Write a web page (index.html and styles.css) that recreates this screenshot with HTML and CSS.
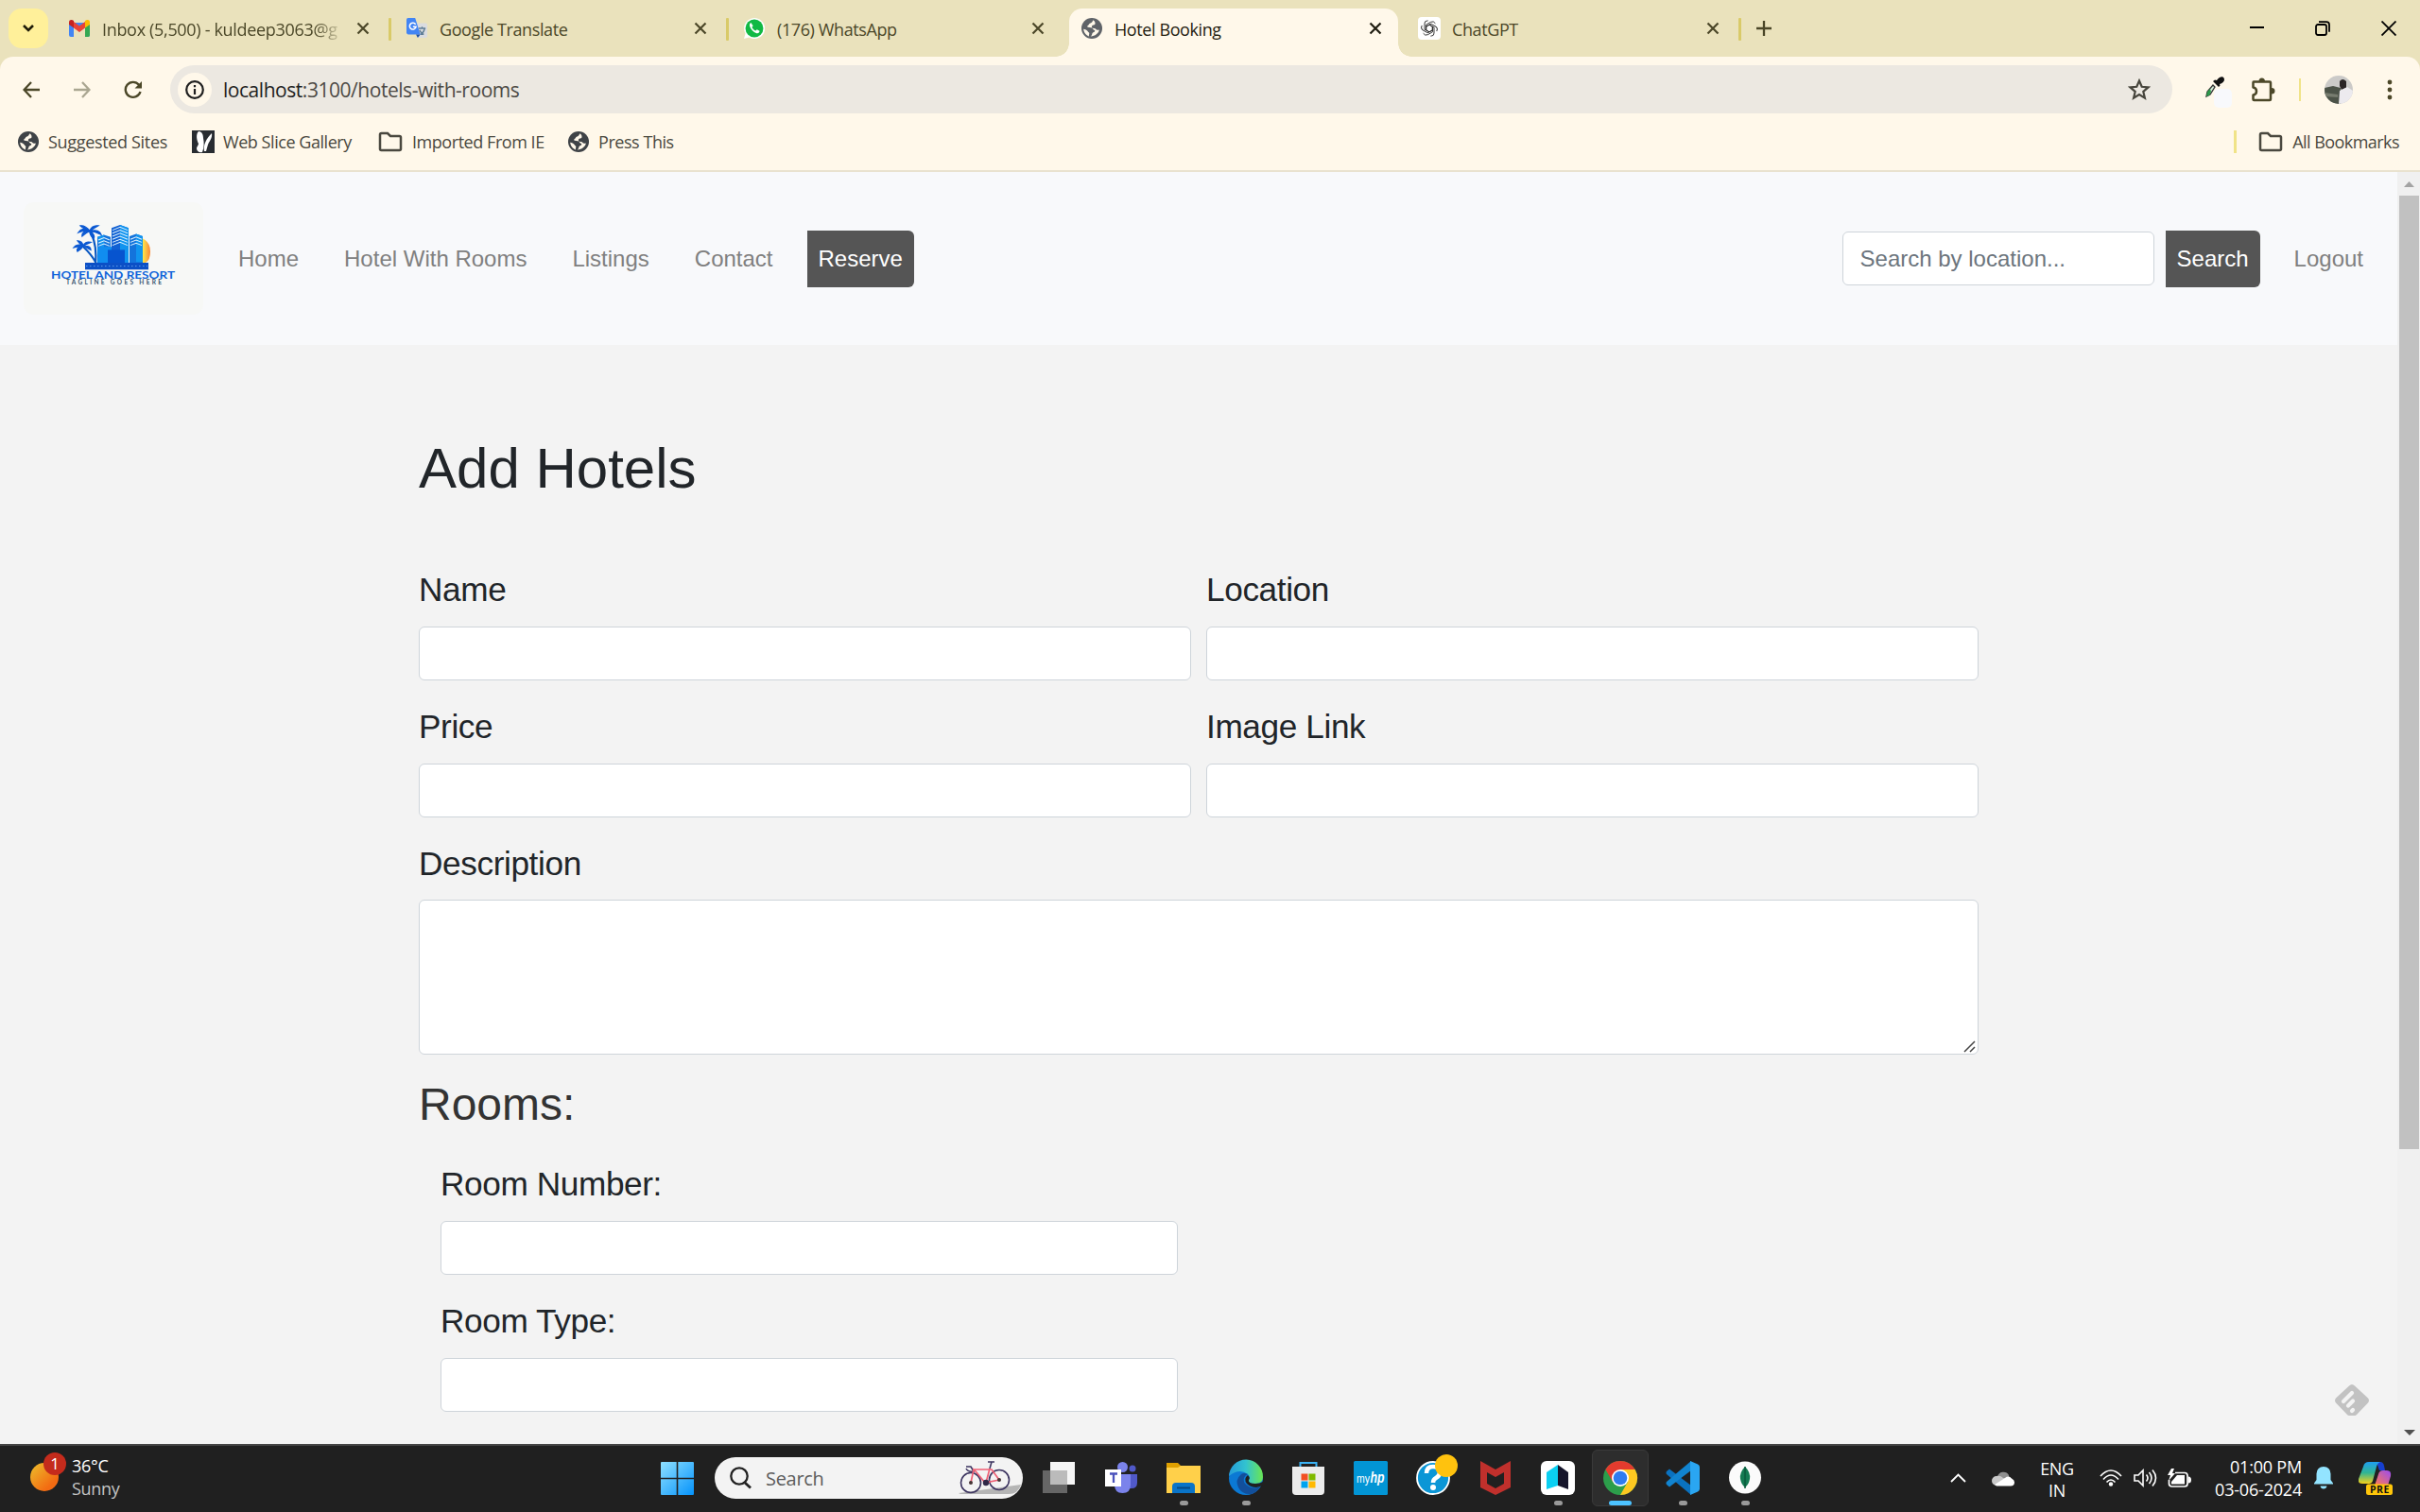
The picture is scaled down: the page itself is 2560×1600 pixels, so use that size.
FILE: index.html
```html
<!DOCTYPE html>
<html lang="en">
<head>
<meta charset="utf-8">
<title>Hotel Booking</title>
<link rel="stylesheet" href="styles.css">
</head>
<body>
<svg class="defs" width="0" height="0">
  <symbol id="close" viewBox="0 0 14 14"><path d="M1.5 1.5l11 11M12.5 1.5l-11 11" fill="none" stroke="currentColor" stroke-width="2.2"/></symbol>
  <symbol id="globe" viewBox="0 0 22 22"><circle cx="11" cy="11" r="11" fill="currentColor"/><path d="M12.5 2.2c-1 1.2-1.2 2.8-3 3.2-1.600.400-1.500 1.900-2.700 2.600-.8.500-.8 1.600.2 1.800 2 .300 4.500.200 5 1.700.5 1.400 2.300 1 2.300 2.300 0 1.200-2.300 1.200-2.800 2.400-.3.900-.3 2.300-1.800 3.400 4.900-.2 8.300-3.200 9.200-7-1.300.500-3 .2-3.700-.9-.6-1-1.900-.7-3.200-1-1.400-.3-1.500-2.300-.2-2.900 1.300-.5 2.500-.2 2.700-1.800.1-1-.1-2.400-2-3.800zM2.200 11.700c1.500.2 3.800 1 4.400 2.200.5 1.200 1.900 1.300 1.700 2.600-.1 1-.7 1.800-.2 2.900-3.200-1-5.700-4-5.900-7.700z" fill="var(--cut)"/></symbol>
  <symbol id="folder" viewBox="0 0 26 22"><path d="M2 3.500Q2 2 3.500 2h6.500l3 3h9.500Q24 5 24 6.500v12Q24 20 22.500 20h-19Q2 20 2 18.500z" fill="none" stroke="currentColor" stroke-width="2.500"/></symbol>
</svg>

<header class="browser">
  <div class="tabstrip">
    <button class="tab-search"><svg width="14" height="10" viewBox="0 0 14 10"><path d="M2 2l5 5 5-5" fill="none" stroke="#1f1c08" stroke-width="2.600"/></svg></button>
    <div class="tab sep">
      <svg class="fav" viewBox="0 0 22 18"><path d="M0 3v13q0 2 2 2h3V8l6 4.500L17 8v10h3q2 0 2-2V3z" fill="#4285f4"/><path d="M17 8v10h3q2 0 2-2V4z" fill="#34a853"/><path d="M17 3v5.500L22 5V2.500C22-.2 19-.7 17 1z" fill="#fbbc04"/><path d="M5 8.500V2l6 4.500L17 2v6.500L11 13z" fill="#ea4335"/><path d="M0 5V2.500C0-.2 3-.7 5 1v7.500z" fill="#c5221f"/></svg>
      <span class="tab-title faded">Inbox (5,500) - kuldeep3063@g</span>
      <svg class="x"><use href="#close"/></svg>
    </div>
    <div class="tab sep">
      <svg class="fav" viewBox="0 0 24 24"><path d="M10 6h12q2 0 2 2v13q0 2-2 2H13z" fill="#dadce0"/><path d="M14 12h8m-4-2v2m3 0q-1 5-5 7m-1-5q2 4 5 5" stroke="#5f7d95" stroke-width="1.500" fill="none"/><path d="M2 0h8l6 19H2q-2 0-2-2V2q0-2 2-2z" fill="#4285f4"/><path d="M11 19h5l-3 4z" fill="#174ea6"/><path d="M10.500 7.500A3.700 3.700 0 1 0 11 10H7.500" fill="none" stroke="#fff" stroke-width="1.700"/></svg>
      <span class="tab-title">Google Translate</span>
      <svg class="x"><use href="#close"/></svg>
    </div>
    <div class="tab">
      <svg class="fav" viewBox="0 0 24 24"><path d="M0 24l1.700-6A12 12 0 1 1 6 22.400z" fill="#fff"/><circle cx="12" cy="12" r="10.300" fill="#11b944"/><path d="M8 5.500c-1.500.8-2 2.500-1 4.800 1.500 3.500 4 6 7 7.200 2.300.8 4-.5 4-2.500l-3-1.700-1.500 1.500c-2-.8-3.500-2.300-4.300-4.200L10.500 9z" fill="#fff"/></svg>
      <span class="tab-title">(176) WhatsApp</span>
      <svg class="x"><use href="#close"/></svg>
    </div>
    <div class="tab active">
      <svg class="fav globe"><use href="#globe"/></svg>
      <span class="tab-title">Hotel Booking</span>
      <svg class="x"><use href="#close"/></svg>
    </div>
    <div class="tab sep">
      <svg class="fav wide" viewBox="0 0 24 24"><rect width="24" height="24" rx="4" fill="#fff"/><g fill="none" stroke="#222" stroke-width=".9"><path id="pt" d="M12 8.200l3.400 2v5.600l-4.800 2.800a3.700 3.700 0 0 1-5-1.400"/><use href="#pt" transform="rotate(60 12 12)"/><use href="#pt" transform="rotate(120 12 12)"/><use href="#pt" transform="rotate(180 12 12)"/><use href="#pt" transform="rotate(240 12 12)"/><use href="#pt" transform="rotate(300 12 12)"/></g></svg>
      <span class="tab-title">ChatGPT</span>
      <svg class="x"><use href="#close"/></svg>
    </div>
    <svg class="plus" width="16" height="16" viewBox="0 0 16 16"><path d="M8 0v16M0 8h16" stroke="#4b4728" stroke-width="2.300"/></svg>
    <div class="window-buttons">
      <svg width="16" height="16" viewBox="0 0 16 16"><path d="M1 7h15" stroke="#000" stroke-width="2"/></svg>
      <svg width="16" height="16" viewBox="0 0 16 16"><rect x="1" y="4" width="11" height="11" rx="2" fill="none" stroke="#000" stroke-width="1.800"/><path d="M4 1.200h8q3 0 3 3v7.500" fill="none" stroke="#000" stroke-width="1.800"/></svg>
      <svg width="16" height="16" viewBox="0 0 16 16"><path d="M.5.500l15 15M15.500.500l-15 15" stroke="#000" stroke-width="1.800"/></svg>
    </div>
  </div>
  <div class="toolbar">
    <svg class="back" width="18" height="18" viewBox="0 0 18 18"><path d="M18 9H2M9 1L1.500 9 9 17" fill="none" stroke="#4b4728" stroke-width="2.300"/></svg>
    <svg class="fwd" width="18" height="18" viewBox="0 0 18 18"><path d="M0 9h16M9 1l7.500 8L9 17" fill="none" stroke="#aaa691" stroke-width="2.300"/></svg>
    <svg class="reload" width="20" height="20" viewBox="0 0 20 20"><path d="M17.500 12A8 8 0 1 1 16 4.800L18 7" fill="none" stroke="#4b4728" stroke-width="2.400"/><path d="M19 1v7.500h-7.500z" fill="#4b4728"/></svg>
    <div class="omnibox">
      <span class="info"><svg width="20" height="20" viewBox="0 0 20 20"><circle cx="10" cy="10" r="8.800" fill="none" stroke="#1f1f1f" stroke-width="2.200"/><path d="M10 9v6M10 5v2.200" stroke="#1f1f1f" stroke-width="2.200"/></svg></span>
      <span class="url"><b>localhost</b>:3100/hotels-with-rooms</span>
      <svg class="star" width="24" height="23" viewBox="0 0 24 23"><path d="M12 2.500l2.700 6.300 6.800.6-5.200 4.500 1.600 6.700L12 17l-5.900 3.600 1.600-6.700-5.200-4.500 6.800-.6z" fill="none" stroke="#47453c" stroke-width="2.200"/></svg>
    </div>
    <div class="extensions">
      <svg width="30" height="34" viewBox="0 0 30 34"><path d="M2 21l1-5 6-7 2 2-5 8z" fill="#cfe8d4" stroke="#333" stroke-width="1.300"/><path d="M2 21l1-5 3-3 1 3-2 4z" fill="#2c9a4b"/><path d="M9 5l6 6 1.500-1.500L16 8c4-1 6-4 4.500-6.500S15 1 13 4l-2-.5z" fill="#111"/><rect x="10" y="13" width="19" height="20" rx="5" fill="#f8f9fc"/></svg>
      <svg class="puzzle" width="26" height="26" viewBox="0 0 26 26"><path d="M3 4.500h17q1 0 1 1V23q0 1-1 1H3.500q-1 0-1-1v-4.500q3.500-.5 3.500-4t-3.500-4v-5q0-1 .5-1z" fill="none" stroke="#4b4728" stroke-width="2.500" stroke-linejoin="round"/><path d="M8.500 4q0-3.500 3.200-3.500T15 4zM22 11q3.500 0 3.500 3.200T22 17.500z" fill="#4b4728"/></svg>
      <i class="divider"></i>
      <svg class="avatar" width="30" height="30" viewBox="0 0 30 30"><defs><clipPath id="av"><circle cx="15" cy="15" r="15"/></clipPath></defs><g clip-path="url(#av)"><path fill="#cbcac8" d="M0 0h30v30H0z"/><path fill="#4c5348" d="M0 13l9-2 8 2v17H0z"/><path fill="#777c6f" d="M0 18l14 2v3L0 22z"/><path fill="#2a2526" d="M16 6q3-4 7 0v7l-5 2-2-4z"/><path fill="#eceaee" d="M16 16l8-4 6 4v14H15z"/></g></svg>
      <svg width="6" height="22" viewBox="0 0 6 22"><g fill="#4b4728"><circle cx="3" cy="3" r="2.400"/><circle cx="3" cy="11" r="2.400"/><circle cx="3" cy="19" r="2.400"/></g></svg>
    </div>
  </div>
  <div class="bookmarks">
    <a class="b1"><svg class="globe" width="22" height="22"><use href="#globe"/></svg><span>Suggested Sites</span></a>
    <a class="b2"><svg width="24" height="24" viewBox="0 0 24 24"><path fill="#282c31" d="M0 0h24v24H0z"/><path d="M7 1c4 0 5 4 5 7 1 5 1 10-1 15-3 1-6-1-6-4 0-2 2-3 2-5-2-4-3-10 0-13zM21 3c1 5-3 9-4 12l-2 7h-2c-1-7 2-13 8-19z" fill="#fff"/></svg><span>Web Slice Gallery</span></a>
    <a class="b3"><svg width="26" height="22"><use href="#folder"/></svg><span>Imported From IE</span></a>
    <a class="b4"><svg class="globe" width="22" height="22"><use href="#globe"/></svg><span>Press This</span></a>
    <a class="all"><svg width="26" height="22"><use href="#folder"/></svg><span>All Bookmarks</span></a>
  </div>
</header>

<div class="viewport">
  <div class="page">
    <nav class="navbar">
      <div class="logo">
        <svg width="190" height="119" viewBox="0 0 190 119">
          <defs><linearGradient id="sun" x1="0" x2="1"><stop offset="0" stop-color="#ffe94b"/><stop offset="1" stop-color="#fb8638"/></linearGradient></defs>
          <g transform="translate(0 5.600) scale(1 .8)">
          <path d="M126 41q8 5 8 17t-5 15h-3z" fill="url(#sun)"/>
          <path d="M78 39l7-3 7 3v27H78zM112 38l7-3 7 3v35h-14z" fill="#1474dc"/>
          <path d="M93 27l9-4 9 4v40H93z" fill="#1160d3"/>
          <path d="M102 23l9 4v46h-9zM119 35l7 3v34h-7zM78 39l7-3v30z" fill="#1194ef"/>
          <path d="M78 52h15v21H78z" fill="#118df0"/>
          <path d="M89 56h18v17H89z" fill="#0754cf"/>
          <path d="M94 30l8-4 8 4M94 34l8-4 8 4M94 38l8-4 8 4M94 42l8-4 8 4M94 46l8-4 8 4M94 50l8-4 8 4M79 43l6-3 6 3M79 47l6-3 6 3M79 51l6-3 6 3M113 42l6-3 6 3M113 46l6-3 6 3M113 50l6-3 6 3" stroke="#d7edfc" stroke-width="1.200" fill="none"/>
          <path d="M70 31q8 17 6 43M63 52q8 9 14 22" stroke="#0a58c2" stroke-width="2.200" fill="none"/>
          <path d="M70 31q-8-6-12 2 5-3 12-2zM70 31q-9 0-8 7 4-5 8-7zM70 31q2-8 9-7-4 3-9 7zM70 31q10-3 12 5-6-4-12-5zM70 31q6 5 4 10-4-4-4-10zM70 31q-5-8-10-7 3 4 10 7zM63 51q-7-4-10 2 5-2 10-2zM63 51q-8 2-6 7 4-3 6-7zM63 51q2-7 8-5-4 2-8 5zM63 51q8-1 8 5-5-3-8-5zM63 51q-1-7-6-7 2 4 6 7z" fill="#0a58d2" stroke="#0a58d2" stroke-width="1.400"/>
          <path d="M65 73h67v9H65z" fill="#0c50c6"/><path d="M66 77.500h65" stroke="#69a6f1" stroke-width="1" stroke-dasharray="1.500 2.500"/>
          </g>
          <text x="29" y="81" textLength="131" lengthAdjust="spacingAndGlyphs" class="logo-name">HOTEL AND RESORT</text>
          <text x="45" y="87.200" textLength="101" class="logo-tag">TAGLINE GOES HERE</text>
        </svg>
      </div>
      <ul class="menu"><li>Home</li><li>Hotel With Rooms</li><li>Listings</li><li>Contact</li></ul>
      <button class="btn reserve">Reserve</button>
      <form class="search"><input class="control" placeholder="Search by location..."><button type="button" class="btn">Search</button></form>
      <a class="logout">Logout</a>
    </nav>
    <main class="content">
      <h1>Add Hotels</h1>
      <form>
        <div class="grid">
          <div class="field"><label>Name</label><input class="control"></div>
          <div class="field"><label>Location</label><input class="control"></div>
          <div class="field"><label>Price</label><input class="control"></div>
          <div class="field"><label>Image Link</label><input class="control"></div>
        </div>
        <div class="field description"><label>Description</label><textarea class="control area"></textarea><svg class="grip" width="13" height="13" viewBox="0 0 13 13"><path d="M1 12L12 1M7 12l5-5" stroke="#444" stroke-width="1.500"/></svg></div>
        <h3>Rooms:</h3>
        <div class="room">
          <div class="field"><label>Room Number:</label><input class="control"></div>
          <div class="field"><label>Room Type:</label><input class="control"></div>
        </div>
      </form>
    </main>
    <svg class="feedly" width="36" height="33" viewBox="0 0 36 33"><path d="M15 1.500q3-3 6 0l14 13q2 2.500 0 5L23 32q-1 1-2 1h-6q-1 0-2-1L1 19.500q-2-2.500 0-5z" fill="#c2c2c2"/><path d="M9 18L18 9M14 22.500l5-5M18 28l1-1" stroke="#f3f3f3" stroke-width="4.200" stroke-linecap="round"/></svg>
  </div>
  <div class="scrollbar">
    <svg width="11" height="6" viewBox="0 0 11 6"><path d="M0 6L5.500 0 11 6z" fill="#a3a3a3"/></svg>
    <div class="thumb"></div>
    <svg class="down" width="12" height="6" viewBox="0 0 12 6"><path d="M0 0h12L6 6z" fill="#505050"/></svg>
  </div>
</div>

<footer class="taskbar">
  <div class="weather">
    <div class="sun"><span class="badge">1</span></div>
    <div class="temp"><span>36°C</span><span class="cond">Sunny</span></div>
  </div>
  <svg class="start" width="35" height="35" viewBox="0 0 35 35"><defs><linearGradient id="win" x1="0" y1="0" x2="1" y2="1"><stop offset="0" stop-color="#8fe0ff"/><stop offset="1" stop-color="#0593fb"/></linearGradient></defs><path d="M1 0h15.700v16.700H0V1q0-1 1-1zM18.300 0H34q1 0 1 1v15.700H18.300zM0 18.300h16.700V35H1q-1 0-1-1zM18.300 18.300H35V34q0 1-1 1H18.300z" fill="url(#win)"/></svg>
  <div class="task-search">
    <svg width="23" height="24" viewBox="0 0 23 24"><circle cx="10" cy="10" r="8.700" fill="none" stroke="#222" stroke-width="2.300"/><path d="M16 17l6 5.500" stroke="#222" stroke-width="2.800"/></svg>
    <span>Search</span>
    <svg class="bike" width="66" height="36" viewBox="0 0 66 36"><path d="M0 34l66-9q-3 10-13 10H2z" fill="#b5b5b5"/><g fill="none"><g stroke="#3d3560" stroke-width="1.600"><circle cx="13" cy="23" r="10.500"/><circle cx="43" cy="20" r="10.500"/><path d="M8 6h5l3 5q-6 1-8-3M31 1h7M35 1l-2 7"/></g><path d="M13 23l3-14 3 3 9 11 15-3-8-11H17M33 8l-4 15" stroke="#ef6075" stroke-width="1.700"/></g><circle cx="29" cy="23" r="3.200" fill="#302848"/><circle cx="13" cy="23" r="2" fill="#433"/><circle cx="43" cy="20" r="2" fill="#433"/></svg>
  </div>
  <div class="apps">
    <span class="app"><svg viewBox="0 0 36 36"><path d="M1 10h26v24H1z" fill="#666"/><path d="M9 1h26v24H9z" fill="#f5f5f5"/><path d="M9 10h18v15H9z" fill="#bbb"/></svg></span>
    <span class="app"><svg viewBox="0 0 36 36"><circle cx="30" cy="8" r="3.500" fill="#5059c9"/><path d="M25 14h10v9q0 6-6 6h-4z" fill="#5059c9"/><circle cx="19.500" cy="6.500" r="5.500" fill="#7b83eb"/><path d="M11 14h17v11q0 9-8.500 9T11 25z" fill="#7b83eb"/><path d="M1 9h17v18H1z" fill="#fff"/><path d="M6 13.500h8M10 13v10" stroke="#4b53bc" stroke-width="2.300"/></svg></span>
    <span class="app run"><svg viewBox="0 0 36 36"><path d="M0 2h12l4 4v8H0z" fill="#dfa000"/><path d="M0 7h12l3-2h21v29H0z" fill="#ffd04a"/><path d="M6 34V27q0-4 4-4h16q4 0 4 4v7z" fill="#0a74c8"/><path d="M11 28.500h14" stroke="#064884" stroke-width="2"/></svg></span>
    <span class="app run"><svg viewBox="0 0 36 36"><defs><linearGradient id="e1"><stop offset="0" stop-color="#249bd8"/><stop offset=".5" stop-color="#32c3d0"/><stop offset="1" stop-color="#6be651"/></linearGradient></defs><circle cx="18" cy="18" r="18" fill="#0b79d4"/><path d="M0 16A18 18 0 0 1 36 17q0 7-8 7-8 0-7-4 2-3-1-6-9-7-20 2z" fill="url(#e1)"/><path d="M13 14q-7 6-3 14 4 8 14 7 7-3 9-8-6 3-12 0-7-4-5-9 1-3 4-4-4-2-7 0z" fill="#124f9b"/><path d="M20 15q-5 4-1 9 4 4 10 4 4 0 7-3v-3q-3 2-8 2-8 0-7-4 2-2-1-5z" fill="#202020"/></svg></span>
    <span class="app"><svg viewBox="0 0 36 36"><path d="M9.500 8V2h17v6" fill="none" stroke="#3bb3f5" stroke-width="2"/><path d="M1 6h34v26q0 4-4 4H5q-4 0-4-4z" fill="#ececec"/><path d="M10.500 13.500h7v7h-7z" fill="#f25022"/><path d="M18.500 13.500h7v7h-7z" fill="#7fba00"/><path d="M10.500 21.500h7v7h-7z" fill="#00a4ef"/><path d="M18.500 21.500h7v7h-7z" fill="#ffb900"/></svg></span>
    <span class="app"><svg viewBox="0 0 36 36"><rect width="36" height="36" rx="1.500" fill="#0295d5"/><text x="3" y="22.500" textLength="14" lengthAdjust="spacingAndGlyphs" class="my">my</text><text x="17.500" y="23" textLength="15" lengthAdjust="spacingAndGlyphs" class="hp">hp</text></svg></span>
    <span class="app"><svg viewBox="0 0 36 36"><circle cx="18" cy="18" r="17" fill="#0b96d6" stroke="#fff" stroke-width="1.800"/><path d="M11 13q0-7 7-7t7 6q0 4-4 6-3 1.500-3 5" fill="none" stroke="#fff" stroke-width="4.500"/><circle cx="18" cy="28" r="3" fill="#fff"/><circle cx="32" cy="5" r="12" fill="#ffc20e"/></svg></span>
    <span class="app"><svg viewBox="0 0 36 36"><path d="M2 0l16 9L34 0v28l-16 8-16-8zM9 12v12l9 5 9-5V12l-9 5z" fill="#c0302c" fill-rule="evenodd"/></svg></span>
    <span class="app run"><svg viewBox="0 0 36 36"><rect width="36" height="36" rx="6" fill="#fff"/><path d="M18 4v22L6 30V12z" fill="#0bd0f2"/><path d="M18 4l11 8v18l-11-4z" fill="#15152b"/></svg></span>
    <span class="app open"><svg viewBox="0 0 36 36"><circle cx="18" cy="18" r="18" fill="#2c9e4b"/><path d="M18 9h15.600A18 18 0 0 1 18 36l8-14z" fill="#fdc821"/><path d="M2.400 9A18 18 0 0 1 33.600 9H18l-8 13z" fill="#e33b2e"/><circle cx="18" cy="18" r="9" fill="#fff"/><circle cx="18" cy="18" r="7.300" fill="#2f7cf0"/></svg></span>
    <span class="app run"><svg viewBox="0 0 36 36"><path d="M1 11l3-2.500L27 26v10L1 14q-1-1.500 0-3z" fill="#0a72c0"/><path d="M1 25l3 2.500L27 10V0L1 22q-1 1.500 0 3z" fill="#1184d0"/><path d="M26 0l8 3.500q2 1 2 3v23q0 2-2 3L26 36z" fill="#2aa6f2"/></svg></span>
    <span class="app run"><svg viewBox="0 0 36 36"><circle cx="18" cy="17.500" r="17" fill="#fbfbfb"/><path d="M18 6q6 6 5 13-1 6-5 9-4-3-5-9-1-7 5-13z" fill="#137a52"/><path d="M18 6v23" stroke="#0a5a3c" stroke-width="1.500"/></svg></span>
  </div>
  <div class="tray">
    <span class="t-chev"><svg width="17" height="10" viewBox="0 0 17 10"><path d="M1 9l7.500-7.500L16 9" fill="none" stroke="#fff" stroke-width="1.800"/></svg></span>
    <span class="t-cloud"><svg width="24" height="17" viewBox="0 0 24 17"><path d="M6 7a6.500 6.500 0 0 1 12-2l1 7H5z" fill="#8f8f8f"/><path d="M5 16A5 5 0 0 1 5 6q4-1 7 2l9 2q3 1 2 4-1 2-3 2z" fill="#c9c9c9"/><path d="M3 15l11-7q4-3 7 .5 3 1.500 3 4 0 4-4 4H5z" fill="#fff"/></svg></span>
    <span class="t-lang"><span>ENG</span><span>IN</span></span>
    <span class="t-ic"><svg width="24" height="18" viewBox="0 0 24 18"><g fill="none" stroke="#fff" stroke-width="1.700"><path d="M1 7q11-12 22 0M4 10.500q8-9 16 0M7.500 13.500q4.500-5 9 0"/></g><circle cx="12" cy="15.500" r="2.200" fill="#fff"/></svg></span>
    <span class="t-sp"><svg width="25" height="20" viewBox="0 0 25 20"><g fill="none" stroke="#fff" stroke-width="1.600"><path d="M1 7h4l5-5v16l-5-5H1zM13.500 6.500q3 3.500 0 7M16.500 4q5 6 0 12M20 1.500q7 8.500 0 17"/></g></svg></span>
    <span class="t-ic"><svg width="25" height="21" viewBox="0 0 25 21"><path d="M8 4.500h10q3 0 3 3V16q0 3-3 3H4.500q-3 0-3-3v-4" fill="none" stroke="#fff" stroke-width="1.700"/><path d="M10 7h8v9.500H4V14zM22 8.500q3 0 3 3.500t-3 3.500zM4 0L0 7h3l-2 6 7-8H5l2-5z" fill="#fff"/></svg></span>
    <span class="t-clock"><span>01:00 PM</span><span>03-06-2024</span></span>
    <span class="t-bell"><svg width="20" height="24" viewBox="0 0 20 24"><path d="M10 0q7 0 7.500 7.500V14L20 17.500V18.500H0v-1L2.500 14V7.500Q3 0 10 0zM6.500 20.500h7Q13 23.500 10 23.500t-3.500-3z" fill="#93e4ff"/></svg></span>
    <span class="t-pilot"><svg width="36" height="35" viewBox="0 0 36 35"><defs><linearGradient id="p1" x2="0" y2="1"><stop offset="0" stop-color="#1f9ef0"/><stop offset=".5" stop-color="#31b593"/><stop offset="1" stop-color="#f6d11a"/></linearGradient><linearGradient id="p2" x1="1" x2="0" y2="1"><stop offset="0" stop-color="#9b4bf0"/><stop offset="1" stop-color="#ff7c50"/></linearGradient></defs><path d="M19 0h4q3 0 4 4l1 5h-6z" fill="#163fcf"/><path d="M11 0h12q-3 1-4 5l-4 15q-1 3-4 3H4q-5 0-4-5L5 5q1-5 6-5z" fill="url(#p1)"/><path d="M26 9h4q5 0 4 6l-3 10H17l4-12q1-4 5-4z" fill="url(#p2)"/><rect x="8" y="23.500" width="28" height="11.500" rx="2.500" fill="#ffc60a"/><text x="12" y="33" textLength="20" class="pre">PRE</text></svg></span>
  </div>
</footer>
</body>
</html>
```
FILE: styles.css
```css
* { box-sizing: border-box; }
body { margin: 0; width: 2560px; height: 1600px; overflow: hidden; display: flex; flex-direction: column; font-family: "Open Sans", sans-serif; }
svg { display: block; flex: none; }
.defs { position: absolute; }
button { border: 0; padding: 0; font: inherit; }

/* Browser chrome */
.browser { height: 182px; background: #eae2bc; border-bottom: 2px solid #e9e2cf; flex: none; }
.tabstrip { height: 60px; display: flex; padding-left: 9px; }
.tab-search { width: 42px; height: 42px; margin: 9px 9px 0 0; border-radius: 14px; background: #fff09a; display: grid; place-items: center; }
.tab { position: relative; width: 348px; height: 51px; margin: 9px 9px 0 0; display: flex; align-items: center; padding: 0 17px 9px 13px; color: #4b4728; font-size: 18px; letter-spacing: -0.4px; }
.tab.sep::after { content: ""; position: absolute; left: 351px; top: 10px; width: 3px; height: 24px; background: #d9ca68; border-radius: 1px; }
.fav { width: 22px; height: 22px; margin-right: 13px; }
.fav.wide { width: 24px; height: 24px; margin: 0 12px 0 -1px; }
.tab-title { flex: 1; white-space: nowrap; overflow: hidden; padding-top: 2px; }
.faded { letter-spacing: -0.32px; margin-right: 13px; -webkit-mask-image: linear-gradient(90deg, #000 88%, transparent); mask-image: linear-gradient(90deg, #000 88%, transparent); }
.x { width: 14px; height: 14px; }
.active { background: #fff8ea; border-radius: 14px 14px 0 0; color: #1f1c10; }
.active::before, .active::after { content: ""; position: absolute; bottom: 0; width: 14px; height: 14px; }
.active::before { left: -14px; background: radial-gradient(circle at 0 0, transparent 13.5px, #fff8ea 14px); }
.active::after { right: -14px; background: radial-gradient(circle at 100% 0, transparent 13.5px, #fff8ea 14px); }
.globe { color: #3f4347; --cut: #fff8ea; }
.active .globe { color: #5f6368; }
.plus { margin: 22px 0 0 13px; }
.window-buttons { margin: 22px 25px 0 auto; display: flex; gap: 54px; }
.toolbar { height: 69px; background: #fff8ea; border-radius: 14px 14px 0 0; display: flex; align-items: center; padding: 0 29px 0 24px; }
.fwd { margin-left: 36px; }
.reload { margin-left: 35px; }
.omnibox { flex: none; margin-left: 29px; width: 2118px; height: 51px; border-radius: 26px; background: #ece8e1; display: flex; align-items: center; }
.info { width: 36px; height: 36px; margin-left: 8px; border-radius: 50%; background: #fff8ea; display: grid; place-items: center; }
.url { margin-left: 12px; font-size: 21px; letter-spacing: -0.46px; color: #4d4a45; }
.url b { font-weight: 400; color: #1f1f1f; }
.star { margin: 0 23px 0 auto; }
.extensions { flex: 1; display: flex; align-items: center; justify-content: flex-end; }
.extensions svg:first-child { margin: 7px 19px 0 0; }
.divider { width: 2px; height: 24px; background: #f0e387; margin: 0 25px 0 25px; }
.avatar { margin-right: 36px; }
.bookmarks { height: 51px; background: #fff8ea; display: flex; padding: 0 22px 9px 19px; font-size: 18px; letter-spacing: -0.45px; color: #4a483f; }
.bookmarks a { display: flex; align-items: center; gap: 10px; white-space: nowrap; }
.b1 { width: 184px; letter-spacing: -0.33px; }
.b2 { width: 197px; }
.b2 span { margin-left: -1px; }
.b3 { width: 201px; }
.bookmarks .all { margin-left: auto; border-left: 3px solid #f0e387; height: 24px; margin-top: 9px; padding-left: 23px; letter-spacing: -0.55px; }

/* Page */
.viewport { height: 1346px; display: flex; flex: none; background: #f3f3f3; font-family: "Liberation Sans", Arial, sans-serif; }
.page { position: relative; width: 2536px; }
.scrollbar { width: 24px; background: #f0f0f0; padding: 10px 1px 9px 2px; display: flex; flex-direction: column; align-items: center; }
.thumb { width: 21px; height: 1009px; background: #c1c1c1; margin-top: 9px; }
.down { margin-top: auto; }
.navbar { height: 183px; background: #f8f9fb; display: flex; align-items: center; padding: 0 36px 0 25px; font-size: 24px; color: #808080; }
.logo { width: 190px; height: 119px; border-radius: 11px; background: #f7f8f6; }
.logo-name { font: 700 11.500px Lato, sans-serif; fill: #1064da; }
.logo-tag { font: 700 6.500px Lato, sans-serif; fill: #36536d; }
.menu { list-style: none; margin: 0 0 0 37px; padding: 0; display: flex; gap: 48px; }
.btn { height: 60px; background: #555; color: #fff; border-radius: 0 6px 6px 0; padding: 0 12px; }
.reserve { margin-left: 36px; }
.search { display: flex; align-items: center; gap: 12px; margin-left: auto; }
.control { display: block; width: 100%; height: 57px; border: 1.500px solid #ced4da; border-radius: 6px; background: #fff; padding: 1px 18px 0; font: inherit; }
.search .control { width: 330px; }
.control::placeholder { color: #6c757d; }
.logout { margin-left: 36px; }
.content { width: 1650px; margin-left: 443px; color: #212529; }
h1 { font-size: 60px; font-weight: 400; line-height: 72px; margin: 95px 0 65px; }
.grid { display: grid; grid-template-columns: 817px 817px; column-gap: 16px; }
.field { margin-bottom: 22px; }
label { display: block; font-size: 35.200px; letter-spacing: -0.38px; line-height: 53px; margin-bottom: 13px; }
.description { position: relative; margin-bottom: 24px; }
.description label { margin-bottom: 12px; }
.area { height: 164px; resize: none; }
.grip { position: absolute; right: 3px; bottom: 2px; }
h3 { font-size: 48px; font-weight: 400; line-height: 58px; margin: 0 0 28px; color: #333; }
.room { width: 780px; margin-left: 23px; }
.feedly { position: absolute; left: 2470px; top: 1283px; }

/* Windows taskbar */
.taskbar { height: 72px; border-top: 2px solid #444; background: #202020; display: flex; align-items: flex-start; color: #fff; font-size: 18px; letter-spacing: -0.3px; }
.weather { width: 699px; display: flex; padding: 18px 0 0 32px; }
.sun { position: relative; width: 30px; height: 30px; border-radius: 50%; background: linear-gradient(135deg, #edc02c, #f36b12 75%); }
.badge { position: absolute; left: 14px; top: -11px; width: 24px; height: 24px; border-radius: 50%; background: #c42b1c; text-align: center; line-height: 24px; font-size: 17px; }
.temp { margin: -9px 0 0 14px; display: flex; flex-direction: column; line-height: 24px; }
.cond { color: #c4c4c4; }
.start { margin: 17px 22px 0 0; }
.task-search { width: 326px; height: 44px; margin-top: 12px; border-radius: 22px; background: #f3f3f3; display: flex; align-items: center; padding-left: 16px; font-size: 20px; color: #5c5c5c; overflow: hidden; }
.task-search span { margin: 0 auto 0 15px; }
.bike { margin-right: 2px; }
.apps { display: flex; gap: 6px; margin: 4px 0 0 8px; }
.app { position: relative; width: 60px; height: 60px; display: grid; place-items: center; }
.app svg { width: 36px; height: 36px; overflow: visible; }
.run::after, .open::after { content: ""; position: absolute; left: 25.500px; top: 54px; width: 9px; height: 5px; border-radius: 3px; background: #9a9a9a; }
.open { background: #2d2d2d; border: 1px solid #3a3a3a; border-radius: 6px; }
.open::after { left: 17px; width: 24px; top: 53px; background: #4cc2ff; }
.my { font: 12px "Liberation Sans", sans-serif; letter-spacing: 0; fill: #fff; }
.hp { font: italic 700 17px "Liberation Sans", sans-serif; letter-spacing: 0; fill: #fff; }
.pre { font: 700 10.500px "Open Sans", sans-serif; fill: #111; }
.tray { margin-left: 164px; display: flex; height: 68px; align-items: center; line-height: 24px; }
.tray > span { display: grid; justify-items: center; }
.t-chev { width: 62px; }
.t-cloud { width: 34px; }
.t-lang { width: 80px; line-height: 23px; padding-top: 3px; }
.t-ic { width: 34px; }
.t-sp { width: 38px; }
.tray .t-clock { width: 113px; justify-items: end; letter-spacing: -0.2px; }
.t-bell { width: 46px; }
.t-pilot { width: 64px; }
```
